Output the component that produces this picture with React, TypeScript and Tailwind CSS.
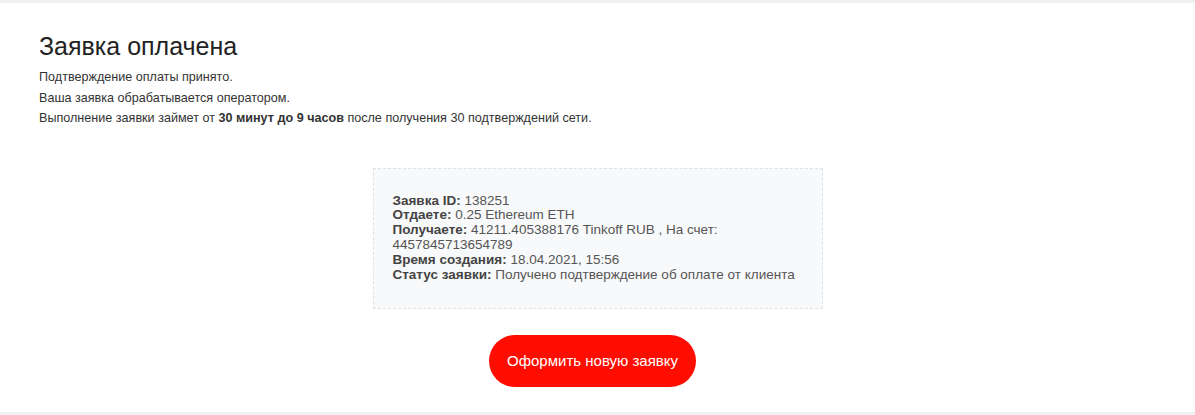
import React from "react";

function App() {
  const rows = [
    { label: "Заявка ID:", value: "138251" },
    { label: "Отдаете:", value: "0.25 Ethereum ETH" },
    { label: "Получаете:", value: "41211.405388176 Tinkoff RUB , На счет: 4457845713654789" },
    { label: "Время создания:", value: "18.04.2021, 15:56" },
    { label: "Статус заявки:", value: "Получено подтверждение об оплате от клиента" },
  ];

  return (
    <div
      className="w-full h-[415px] bg-[#eef2f5] pt-[3px] overflow-hidden"
      style={{ fontFamily: '"Liberation Sans", Arial, sans-serif' }}
    >
      <div className="bg-white h-[409px] px-[39px] pt-[28px]">
        <h1 className="text-[25px] leading-[30px] text-[#222]">Заявка оплачена</h1>
        <div className="mt-[6px] text-[12.6px] leading-[20.5px] text-[#333]">
          <p>Подтверждение оплаты принято.</p>
          <p>Ваша заявка обрабатывается оператором.</p>
          <p>
            Выполнение заявки займет от <b>30 минут до 9 часов</b> после получения 30
            подтверждений сети.
          </p>
        </div>

        <div className="flex flex-col items-center mt-[39px]">
          <div className="w-[450px] border border-dashed border-[#dfe2e6] bg-[#f8f9fa] pl-[19px] pr-[18px] pt-[25px] pb-[25px] text-[13.5px] leading-[14.9px] text-[#555]">
            {rows.map((r) => (
              <div key={r.label}>
                <b className="text-[#444]">{r.label}</b> {r.value}
              </div>
            ))}
          </div>

          <button className="mt-[26px] mr-[10px] h-[52px] px-[18px] rounded-full bg-[#ff0d00] text-white text-[15px]">
            Оформить новую заявку
          </button>
        </div>
      </div>
    </div>
  );
}

export default App;
